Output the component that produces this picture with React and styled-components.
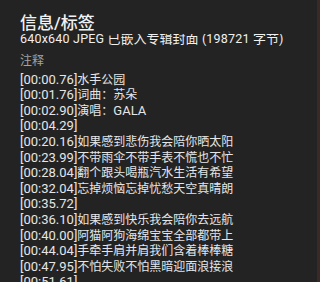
import React from "react";
import styled, { createGlobalStyle } from "styled-components";

const GlobalStyle = createGlobalStyle`
  html, body {
    margin: 0;
    padding: 0;
    background: #232323;
  }
`;

const Dialog = styled.div`
  display: flex;
  flex-direction: column;
  box-sizing: border-box;
  width: 320px;
  height: 282px;
  overflow: hidden;
  background: #232323;
  border-right: 3px solid #3a2925;
  font-family: Roboto, "Noto Sans CJK SC", sans-serif;
`;

const Title = styled.h1`
  box-sizing: border-box;
  flex: none;
  height: 34px;
  margin: 0;
  padding: 12px 20px 0;
  font-size: 17px;
  line-height: 22px;
  font-weight: 500;
  color: #f2f2f2;
`;

const Body = styled.div`
  flex: 1;
  overflow: hidden;
  padding: 0 20px;
`;

// the list is scrolled a few pixels, so the first row sits under the title
const Scrolled = styled.div`
  margin-top: -3.5px;
`;

const Cover = styled.div`
  font-size: 12.5px;
  line-height: 16px;
  font-weight: 400;
  letter-spacing: 0.2px;
  color: #f0f0f0;
  white-space: nowrap;

  .cjk {
    font-size: 13px;
    letter-spacing: 0;
  }
`;

const Label = styled.div`
  margin-top: 6.5px;
  font-size: 12px;
  line-height: 16px;
  color: #a2a2a2;
`;

const Lyrics = styled.ul`
  list-style: none;
  margin: 2.7px 0 0;
  padding: 0;
`;

const Line = styled.li`
  font-size: 13px;
  line-height: 15.6px;
  height: 15.6px;
  color: #e6e6e6;
  white-space: nowrap;
`;

const Words = styled.span`
  font-size: ${({ $latin }) => ($latin ? "13px" : "12px")};
`;

const lyrics = [
  ["00:00.76", "水手公园"],
  ["00:01.76", "词曲：苏朵"],
  ["00:02.90", "演唱：GALA"],
  ["00:04.29", ""],
  ["00:20.16", "如果感到悲伤我会陪你晒太阳"],
  ["00:23.99", "不带雨伞不带手表不慌也不忙"],
  ["00:28.04", "翻个跟头喝瓶汽水生活有希望"],
  ["00:32.04", "忘掉烦恼忘掉忧愁天空真晴朗"],
  ["00:35.72", ""],
  ["00:36.10", "如果感到快乐我会陪你去远航"],
  ["00:40.00", "阿猫阿狗海绵宝宝全部都带上"],
  ["00:44.04", "手牵手肩并肩我们含着棒棒糖"],
  ["00:47.95", "不怕失败不怕黑暗迎面浪接浪"],
  ["00:51.61", ""],
  ["00:55.10", ""],
];

const renderWords = (text) =>
  text
    .split(/([A-Za-z]+)/)
    .filter(Boolean)
    .map((part, i) => (
      <Words key={i} $latin={/^[A-Za-z]+$/.test(part)}>
        {part}
      </Words>
    ));

export default function App() {
  return (
    <>
      <GlobalStyle />
      <Dialog>
        <Title>信息/标签</Title>
        <Body>
          <Scrolled>
            <Cover>
              640x640 JPEG <span className="cjk">已嵌入专辑封面</span> (198721{" "}
              <span className="cjk">字节</span>)
            </Cover>
            <Label>注释</Label>
            <Lyrics>
              {lyrics.map(([time, text]) => (
                <Line key={time}>
                  [{time}]{renderWords(text)}
                </Line>
              ))}
            </Lyrics>
          </Scrolled>
        </Body>
      </Dialog>
    </>
  );
}
